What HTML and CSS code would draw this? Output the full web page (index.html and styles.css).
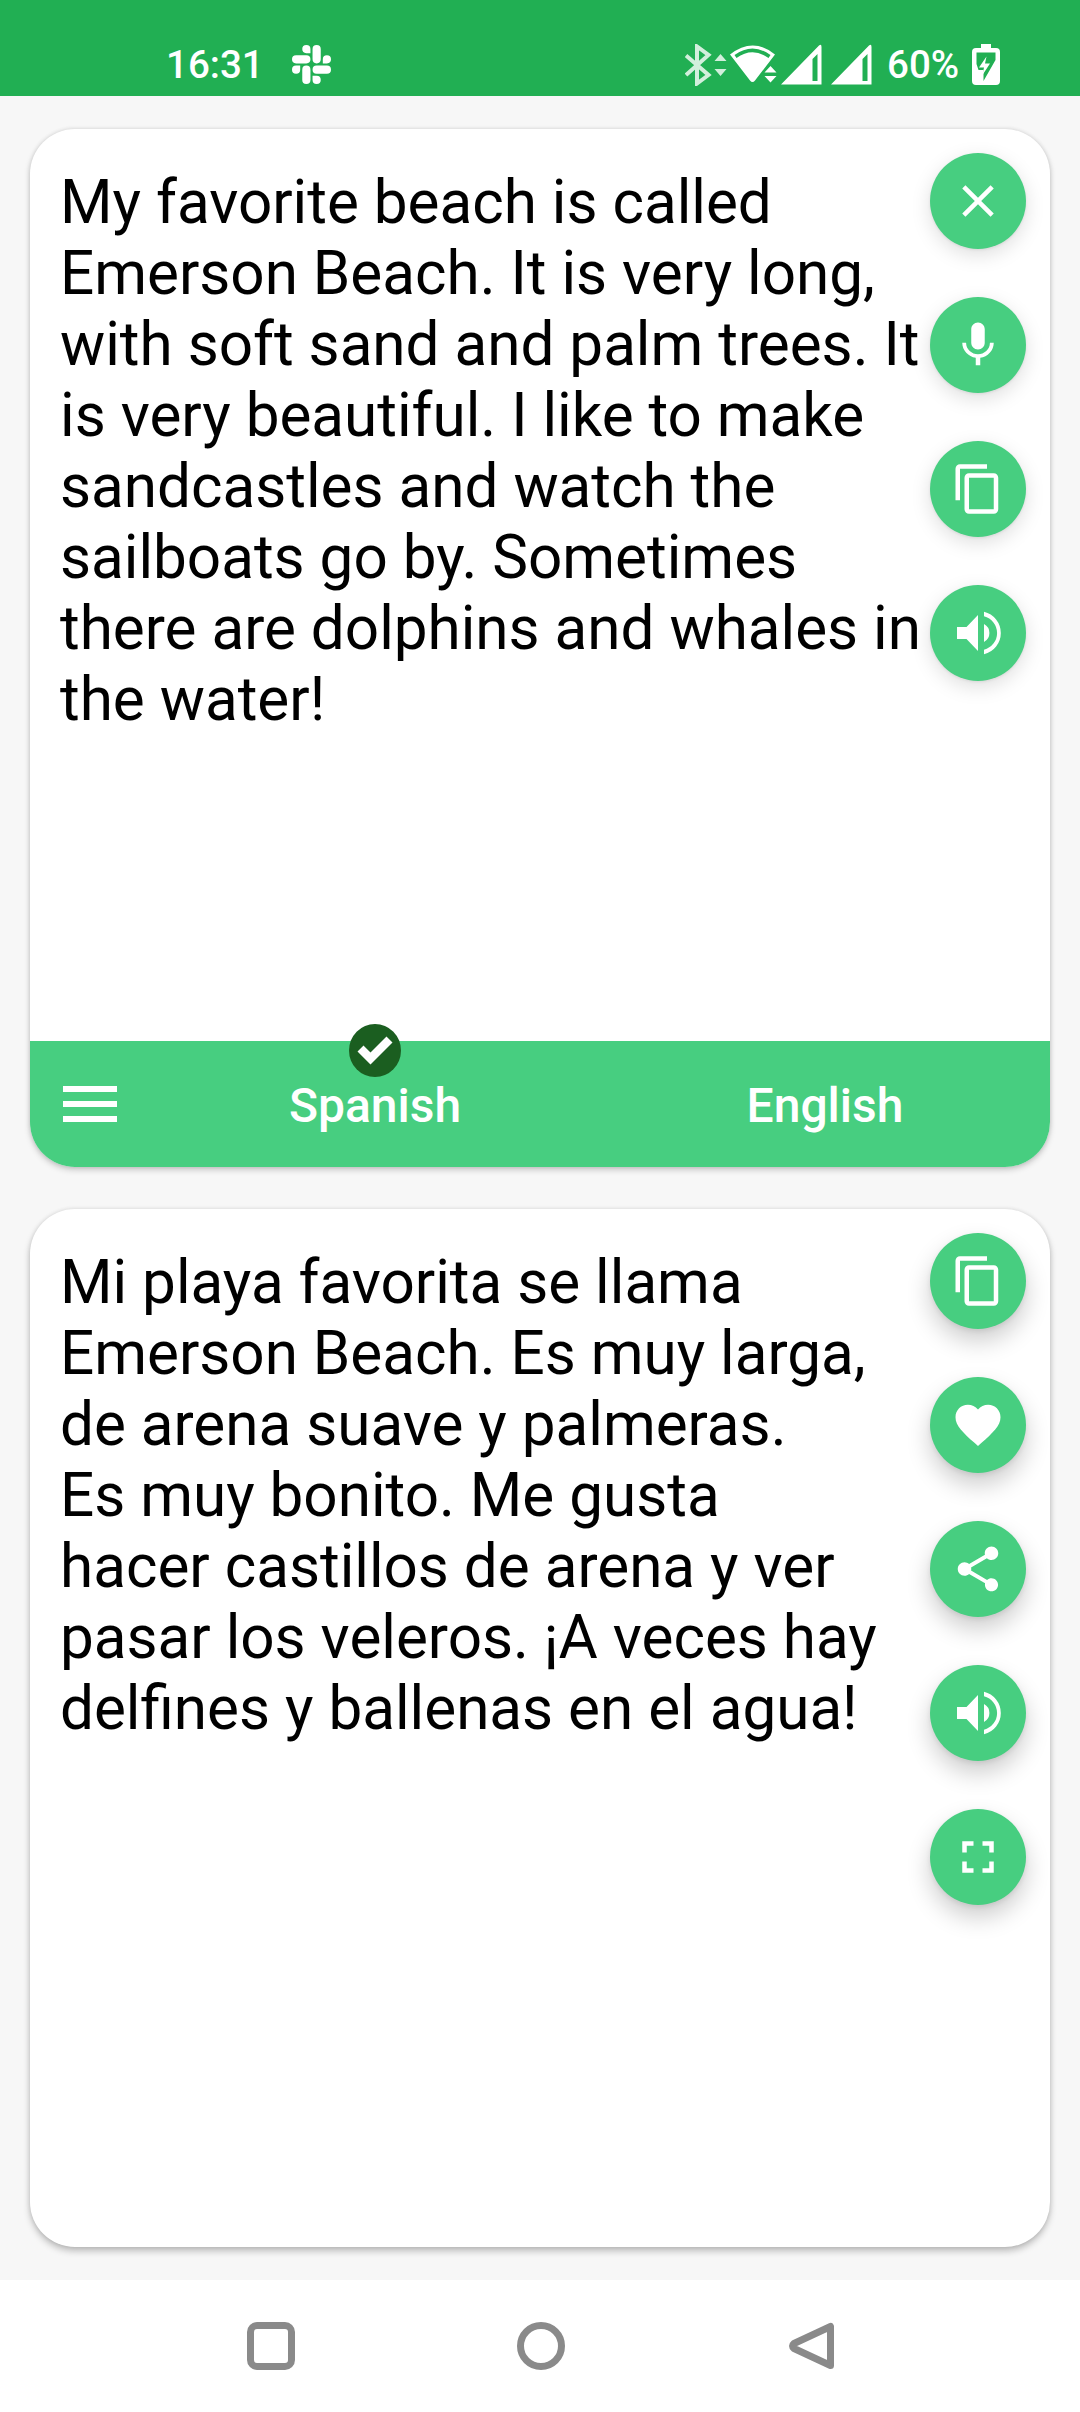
FILE: index.html
```html
<!DOCTYPE html>
<html lang="en">
<head>
<meta charset="utf-8">
<title>Translator</title>
<link rel="stylesheet" href="styles.css">
</head>
<body>
<svg class="defs" aria-hidden="true">
  <symbol id="copy" viewBox="0 0 24 24"><path d="M16 1H4c-1.1 0-2 .9-2 2v14h2V3h12V1zm3 4H8c-1.1 0-2 .9-2 2v14c0 1.1.9 2 2 2h11c1.1 0 2-.9 2-2V7c0-1.1-.9-2-2-2zm0 16H8V7h11v14z"/></symbol>
  <symbol id="volume" viewBox="21 21 54 54"><path d="M27 42h9.500L48 30v36L36.500 54H27zM54 39a10.200 10.200 0 0 1 0 18zM54 26.700a21.900 21.900 0 0 1 0 42.600v-4.600a17.200 17.200 0 0 0 0-33.400z"/></symbol>
  <symbol id="signal" viewBox="0 0 41 41"><path fill-rule="evenodd" d="M0 40.500 38 1.500Q40.500-.5 40.500 3v37.500zM31.500 15v22h5V10z"/></symbol>
</svg>
<header class="status">
  <span class="clock">16:31</span>
  <svg class="slack" viewBox="0 0 24 24"><path d="M5.042 15.165a2.528 2.528 0 0 1-2.520 2.523A2.528 2.528 0 0 1 0 15.165a2.527 2.527 0 0 1 2.522-2.520h2.520v2.520zM6.313 15.165a2.527 2.527 0 0 1 2.521-2.520 2.527 2.527 0 0 1 2.521 2.520v6.313A2.528 2.528 0 0 1 8.834 24a2.528 2.528 0 0 1-2.521-2.522v-6.313zM8.834 5.042a2.528 2.528 0 0 1-2.521-2.520A2.528 2.528 0 0 1 8.834 0a2.528 2.528 0 0 1 2.521 2.522v2.520H8.834zM8.834 6.313a2.528 2.528 0 0 1 2.521 2.521 2.528 2.528 0 0 1-2.521 2.521H2.522A2.528 2.528 0 0 1 0 8.834a2.528 2.528 0 0 1 2.522-2.521h6.312zM18.956 8.834a2.528 2.528 0 0 1 2.522-2.521A2.528 2.528 0 0 1 24 8.834a2.528 2.528 0 0 1-2.522 2.521h-2.522V8.834zM17.688 8.834a2.528 2.528 0 0 1-2.523 2.521 2.527 2.527 0 0 1-2.520-2.521V2.522A2.527 2.527 0 0 1 15.165 0a2.528 2.528 0 0 1 2.523 2.522v6.312zM15.165 18.956a2.528 2.528 0 0 1 2.523 2.522A2.528 2.528 0 0 1 15.165 24a2.527 2.527 0 0 1-2.520-2.522v-2.522h2.520zM15.165 17.688a2.527 2.527 0 0 1-2.520-2.523 2.526 2.526 0 0 1 2.520-2.520h6.313A2.527 2.527 0 0 1 24 15.165a2.528 2.528 0 0 1-2.522 2.523h-6.313z"/></svg>
  <div class="indicators">
    <svg class="bluetooth" viewBox="0 0 42 42"><path class="line" d="M1 11.500 23.500 31 12 39.500V2.500L23.500 11 1 31"/><path d="M29.500 17 35.500 10l6 7zM29.500 25h12l-6 7z"/></svg>
    <svg class="wifi" viewBox="0 0 46 42"><path fill-rule="evenodd" d="M0 10.500Q23-7.500 45 10.500L25 36.500q-2.500 3-5 0zM4.500 11 6.500 14Q22.500 2.500 38.500 14L40.500 11Q22.500-2 4.500 11z"/><path class="halo" d="M34.500 28.500 40.500 22l6 6.500zM34.500 32h12l-6 6.500z"/></svg>
    <svg class="signal" viewBox="0 0 41 41"><use href="#signal"/></svg>
    <svg class="signal" viewBox="0 0 41 41"><use href="#signal"/></svg>
    <span class="percent">60%</span>
    <svg class="battery" viewBox="0 0 28 42"><path d="M9 0h10v4h5q4 0 4 4v29q0 4-4 4H4q-4 0-4-4V8q0-4 4-4h5z"/><path class="cut" d="M4.500 8.500h19v7.500L11.500 37v-11h-5L4.500 20z"/><path d="M14.500 12.500 7 23.500h5l-1.500 7.500L18 19.500h-5z"/></svg>
  </div>
</header>

<main class="cards">
  <section class="card">
    <div class="content">
      <p class="text">My favorite beach is called<br>Emerson Beach. It is very long,<br>with soft sand and palm trees. It<br>is very beautiful. I like to make<br>sandcastles and watch the<br>sailboats go by. Sometimes<br>there are dolphins and whales in<br>the water!</p>
      <div class="actions">
        <button class="fab" aria-label="Clear"><svg viewBox="0 0 24 24"><path d="M19 6.410 17.590 5 12 10.590 6.410 5 5 6.410 10.590 12 5 17.590 6.410 19 12 13.410 17.590 19 19 17.590 13.410 12z"/></svg></button>
        <button class="fab" aria-label="Speak"><svg viewBox="0 0 24 24"><path d="M12 14c1.660 0 2.990-1.340 2.990-3L15 5c0-1.660-1.340-3-3-3S9 3.340 9 5v6c0 1.660 1.340 3 3 3zm5.300-3c0 3-2.540 5.100-5.300 5.100S6.700 14 6.700 11H5c0 3.410 2.720 6.230 6 6.720V21h2v-3.280c3.280-.48 6-3.300 6-6.720h-1.700z"/></svg></button>
        <button class="fab" aria-label="Copy"><svg><use href="#copy"/></svg></button>
        <button class="fab" aria-label="Listen"><svg><use href="#volume"/></svg></button>
      </div>
    </div>
    <div class="languages">
      <button class="menu" aria-label="Menu"><span></span><span></span><span></span></button>
      <button class="language">Spanish
        <svg class="badge" viewBox="0 0 52 53"><ellipse cx="26" cy="26.500" rx="26" ry="26.500"/><path d="M8.500 27.500 14.500 21.500 21.500 28.500 37.500 12.500 43.500 18.500 21.500 40.500z"/></svg>
      </button>
      <button class="language">English</button>
    </div>
  </section>

  <section class="card raised">
    <div class="content">
      <p class="text">Mi playa favorita se llama<br>Emerson Beach. Es muy larga,<br>de arena suave y palmeras.<br>Es muy bonito. Me gusta<br>hacer castillos de arena y ver<br>pasar los veleros. ¡A veces hay<br>delfines y ballenas en el agua!</p>
      <div class="actions">
        <button class="fab" aria-label="Copy"><svg><use href="#copy"/></svg></button>
        <button class="fab" aria-label="Favorite"><svg viewBox="0 0 24 24"><path d="m12 21.350-1.450-1.320C5.400 15.360 2 12.280 2 8.500 2 5.420 4.420 3 7.500 3c1.740 0 3.410.81 4.500 2.090C13.090 3.810 14.760 3 16.500 3 19.580 3 22 5.420 22 8.500c0 3.780-3.400 6.860-8.550 11.540L12 21.350z"/></svg></button>
        <button class="fab" aria-label="Share"><svg viewBox="0 0 24 24"><path d="M18 16.080c-.76 0-1.440.3-1.960.77L8.910 12.700c.05-.23.09-.46.09-.7s-.04-.47-.09-.7l7.050-4.110c.54.5 1.250.81 2.040.81 1.660 0 3-1.340 3-3s-1.340-3-3-3-3 1.340-3 3c0 .24.04.47.09.7L8.040 9.810C7.500 9.310 6.790 9 6 9c-1.660 0-3 1.340-3 3s1.340 3 3 3c.79 0 1.500-.31 2.040-.81l7.120 4.160c-.05.21-.08.43-.08.65 0 1.610 1.310 2.920 2.920 2.920s2.920-1.310 2.920-2.920-1.310-2.920-2.920-2.920z"/></svg></button>
        <button class="fab" aria-label="Listen"><svg><use href="#volume"/></svg></button>
        <button class="fab" aria-label="Full screen"><svg viewBox="0 0 24 24"><path d="M7 14H5v5h5v-2H7v-3zm-2-4h2V7h3V5H5v5zm12 7h-3v2h5v-5h-2v3zM14 5v2h3v3h2V5h-5z"/></svg></button>
      </div>
    </div>
  </section>
</main>

<nav class="navbar">
  <svg viewBox="0 0 48 48"><rect x="3.500" y="3.500" width="41" height="41" rx="6.500"/></svg>
  <svg viewBox="0 0 48 48"><circle cx="24" cy="24" r="20.500"/></svg>
  <svg viewBox="0 0 48 48"><path d="M43.500 4.500v39L7 26.500Q4 24 7 21.500z"/></svg>
</nav>
</body>
</html>
```
FILE: styles.css
```css
* { box-sizing: border-box; }
body {
  margin: 0;
  width: 1080px;
  height: 2412px;
  display: flex;
  flex-direction: column;
  background: #f7f7f7;
  font-family: Roboto, sans-serif;
}
button {
  border: 0;
  padding: 0;
  font: inherit;
  color: inherit;
  background: none;
}
svg { display: block; flex: none; }
.defs { position: absolute; width: 0; height: 0; }

.status {
  height: 96px;
  padding: 33px 80px 0 166px;
  display: flex;
  align-items: center;
  background: #21af53;
  color: #fff;
  fill: #fff;
  font-size: 38.5px;
  font-weight: 500;
}
.clock { width: 96px; }
.slack { width: 39px; height: 39px; margin-left: 30px; }
.indicators {
  margin-left: auto;
  display: flex;
  align-items: center;
}
.bluetooth { width: 42px; height: 42px; opacity: .8; }
.bluetooth .line { fill: none; stroke: #fff; stroke-width: 4; }
.wifi { width: 46px; height: 42px; margin: 0 5px 0 3px; overflow: visible; }
.halo { stroke: #21af53; stroke-width: 2; paint-order: stroke; }
.signal { width: 41px; height: 41px; margin-right: 9px; }
.percent { width: 73px; margin: 0 12px 0 6px; }
.battery { width: 28px; height: 42px; }
.battery .cut { fill: #21af53; }

.cards {
  flex: 1;
  padding: 33px 30px;
  display: flex;
  flex-direction: column;
  gap: 42px;
}
.card {
  flex: 1;
  display: flex;
  flex-direction: column;
  border-radius: 45px;
  background: #fff;
  box-shadow: 0 3px 6px rgba(0, 0, 0, .18), 0 0 4px rgba(0, 0, 0, .12);
}
.card.raised { box-shadow: 0 4px 7px rgba(0, 0, 0, .24), 0 0 4px rgba(0, 0, 0, .1); }
.content {
  flex: 1;
  padding: 24px 24px 0 30px;
  display: flex;
  justify-content: space-between;
}
.text {
  margin: 14px 0 0;
  font-size: 60.2px;
  line-height: 71px;
  white-space: nowrap;
  color: #000;
}
.actions {
  width: 96px;
  flex: none;
  display: flex;
  flex-direction: column;
  gap: 48px;
}
.fab {
  width: 96px;
  height: 96px;
  display: flex;
  align-items: center;
  justify-content: center;
  border-radius: 50%;
  background: #47ce80;
  fill: #fff;
  box-shadow: 0 6px 20px rgba(0, 0, 0, .13), 0 1px 3px rgba(0, 0, 0, .08);
}
.raised .fab { box-shadow: 0 12px 24px rgba(0, 0, 0, .2), 0 2px 5px rgba(0, 0, 0, .08); }
.fab svg { width: 54px; height: 54px; }

.languages {
  height: 126px;
  display: grid;
  grid-template-columns: 120px 1fr 1fr;
  border-radius: 0 0 45px 45px;
  background: #47ce80;
  color: #fff;
  font-size: 48px;
  font-weight: 500;
}
.menu {
  display: flex;
  flex-direction: column;
  align-items: center;
  justify-content: center;
  gap: 9px;
}
.menu span { width: 54px; height: 6px; background: #fff; }
.language { position: relative; padding-top: 2px; }
.badge {
  position: absolute;
  top: -17.5px;
  left: 199px;
  width: 52px;
  height: 53px;
  fill: #1b5e20;
}
.badge path { fill: #fff; }

.navbar {
  height: 132px;
  padding-left: 247px;
  display: flex;
  align-items: center;
  gap: 222px;
  background: #fff;
}
.navbar svg {
  width: 48px;
  height: 48px;
  fill: none;
  stroke: #8a8a8a;
  stroke-width: 7;
  stroke-linejoin: round;
}
```
